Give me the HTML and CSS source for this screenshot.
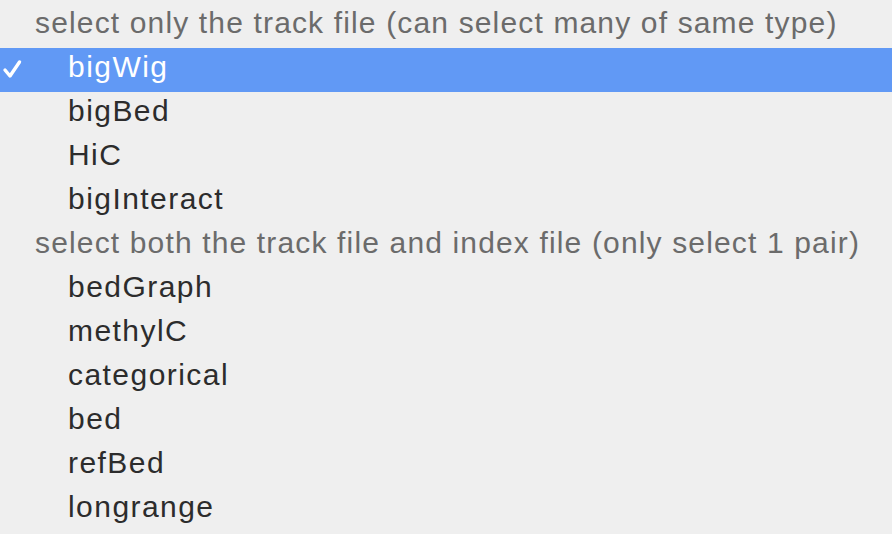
FILE: index.html
```html
<!DOCTYPE html>
<html>
<head>
<meta charset="utf-8">
<link rel="stylesheet" href="styles.css">
</head>
<body>
<div class="menu">
  <div class="group">select only the track file (can select many of same type)</div>
  <div class="item selected"><svg class="check" width="20" height="20" viewBox="0 0 20 20"><path d="M3 11 L8 17 L17.5 3" fill="none" stroke="#ffffff" stroke-width="3.4" stroke-linecap="round" stroke-linejoin="round"/></svg>bigWig</div>
  <div class="item">bigBed</div>
  <div class="item">HiC</div>
  <div class="item">bigInteract</div>
  <div class="group">select both the track file and index file (only select 1 pair)</div>
  <div class="item">bedGraph</div>
  <div class="item">methylC</div>
  <div class="item">categorical</div>
  <div class="item">bed</div>
  <div class="item">refBed</div>
  <div class="item">longrange</div>
</div>
</body>
</html>
```
FILE: styles.css
```css
html, body {
  margin: 0;
  padding: 0;
  background: #efefef;
}
.menu {
  width: 892px;
  height: 534px;
  box-sizing: border-box;
  overflow: hidden;
  display: flex;
  flex-direction: column;
  padding-top: 4px;
  font-family: "Liberation Sans", Arial, sans-serif;
  font-size: 30px;
}
.group, .item {
  height: 44px;
  line-height: 38px;
  white-space: nowrap;
  flex: none;
  box-sizing: border-box;
}
.group {
  color: #6b6b6b;
  padding-left: 35px;
  letter-spacing: 1.15px;
}
.item {
  color: #2c2c2c;
  padding-left: 68px;
  position: relative;
  letter-spacing: 1.45px;
}
.item.selected {
  background: #6199f5;
  color: #ffffff;
}
.check {
  position: absolute;
  left: 2px;
  top: 11px;
}
```
